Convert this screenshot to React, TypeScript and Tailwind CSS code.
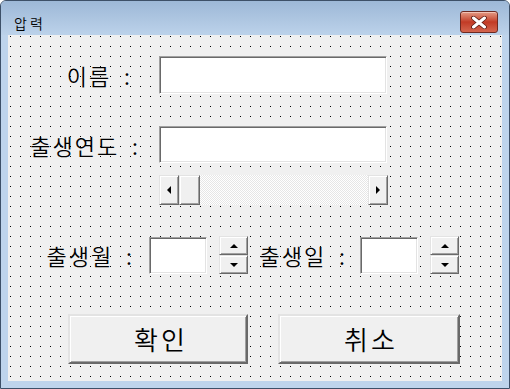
import React from 'react'

const sunken =
  'bg-white border border-t-[#a0a0a0] border-l-[#a0a0a0] border-r-white border-b-white shadow-[inset_1px_1px_0_#696969,inset_-1px_-1px_0_#e3e3e3]'

const raised =
  'bg-[#f0f0f0] border border-t-[#e3e3e3] border-l-[#e3e3e3] border-r-[#696969] border-b-[#696969] shadow-[inset_1px_1px_0_#fff,inset_-1px_-1px_0_#a0a0a0]'

const labelText = 'text-[22px] leading-none font-[350] text-black tracking-[2px] [word-spacing:6px] whitespace-nowrap'

function Arrow({ dir }: { dir: 'up' | 'down' | 'left' | 'right' }) {
  const pts = {
    up: '0,4 4,0 8,4',
    down: '0,0 8,0 4,4',
    left: '4,0 4,8 0,4',
    right: '0,0 0,8 4,4',
  }[dir]
  const vertical = dir === 'up' || dir === 'down'
  return (
    <svg width={vertical ? 8 : 4} height={vertical ? 4 : 8} viewBox={vertical ? '0 0 8 4' : '0 0 4 8'}>
      <polygon points={pts} fill="#000" />
    </svg>
  )
}

function Spin() {
  return (
    <div className="flex flex-col w-[29px] h-[38px]">
      <div className={`${raised} flex-1 flex items-center justify-center`}>
        <Arrow dir="up" />
      </div>
      <div className={`${raised} flex-1 flex items-center justify-center`}>
        <Arrow dir="down" />
      </div>
    </div>
  )
}

export default function App() {
  return (
    <div
      className="w-[510px] h-[389px] flex flex-col bg-[#bed4ec] border border-[#3d5068] rounded-t-[6px] overflow-hidden"
      style={{ fontFamily: '"Noto Sans CJK KR", "Noto Sans", sans-serif' }}
    >
      {/* Title bar */}
      <div className="h-[34px] shrink-0 flex justify-between bg-gradient-to-b from-[#9db8d7] to-[#bcd2ea] pl-[13px] pr-[11px]">
        <span className="pt-[13px] text-[14px] leading-[18px] font-[350] text-black tracking-[3px]">압력</span>
        <div className="mt-[10px] w-[38px] h-[22px] rounded-[3px] border border-[#6e2a22] bg-gradient-to-b from-[#e39a85] via-[#c23a25] to-[#d4654e] flex items-center justify-center shadow-[inset_0_1px_0_#f2c2b4]">
          <svg width="16" height="13" viewBox="0 0 16 13">
            <path d="M2.5 2 L13.5 11 M13.5 2 L2.5 11" stroke="#5a1a12" strokeWidth="4.6" strokeLinecap="round" />
            <path d="M2.5 2 L13.5 11 M13.5 2 L2.5 11" stroke="#fff" strokeWidth="3" strokeLinecap="round" />
          </svg>
        </div>
      </div>

      {/* Client area */}
      <div className="flex-1 mx-[7px] mb-[7px] bg-[#f0f0f0] bg-[conic-gradient(at_1px_1px,transparent_270deg,#000_270deg)] bg-[size:10px_10px] bg-[position:2px_1px] pt-[21px]">
        {/* 이름 */}
        <div className="flex items-center h-[38px]">
          <div className="w-[151px] flex justify-end pr-[27px]">
            <span className={labelText}>이름 :</span>
          </div>
          <div className={`${sunken} w-[228px] h-[38px]`} />
        </div>

        {/* 출생연도 */}
        <div className="flex items-center h-[37px] mt-[32px]">
          <div className="w-[151px] flex justify-end pr-[19px]">
            <span className={labelText}>출생연도 :</span>
          </div>
          <div className={`${sunken} w-[228px] h-[37px]`} />
        </div>

        {/* Scroll bar */}
        <div className="flex h-[30px] w-[229px] ml-[151px] mt-[12px]">
          <div className={`${raised} w-[20px] flex items-center justify-center`}>
            <Arrow dir="left" />
          </div>
          <div className={`${raised} w-[21px]`} />
          <div className="flex-1 bg-[conic-gradient(#e6e6e6_25%,#fff_0_50%,#e6e6e6_0_75%,#fff_0)] bg-[size:2px_2px]" />
          <div className={`${raised} w-[20px] flex items-center justify-center`}>
            <Arrow dir="right" />
          </div>
        </div>

        {/* 출생월 / 출생일 */}
        <div className="flex items-center h-[38px] mt-[31px]">
          <div className="w-[141px] flex justify-end pr-[15px]">
            <span className={labelText}>출생월 :</span>
          </div>
          <div className={`${sunken} w-[58px] h-[37px]`} />
          <div className="ml-[12px]">
            <Spin />
          </div>
          <div className="w-[112px] flex justify-end pr-[13px]">
            <span className={labelText}>출생일 :</span>
          </div>
          <div className={`${sunken} w-[58px] h-[37px]`} />
          <div className="ml-[12px]">
            <Spin />
          </div>
        </div>

        {/* Buttons */}
        <div className="flex gap-[30px] ml-[60px] mt-[40px]">
          <button className={`${raised} border-2 w-[180px] h-[50px] text-[26px] leading-none font-[350] text-black tracking-[3px] pl-[6px]`}>
            확인
          </button>
          <button className={`${raised} border-2 w-[182px] h-[50px] text-[26px] leading-none font-[350] text-black tracking-[3px] pl-[4px]`}>
            취소
          </button>
        </div>
      </div>
    </div>
  )
}
